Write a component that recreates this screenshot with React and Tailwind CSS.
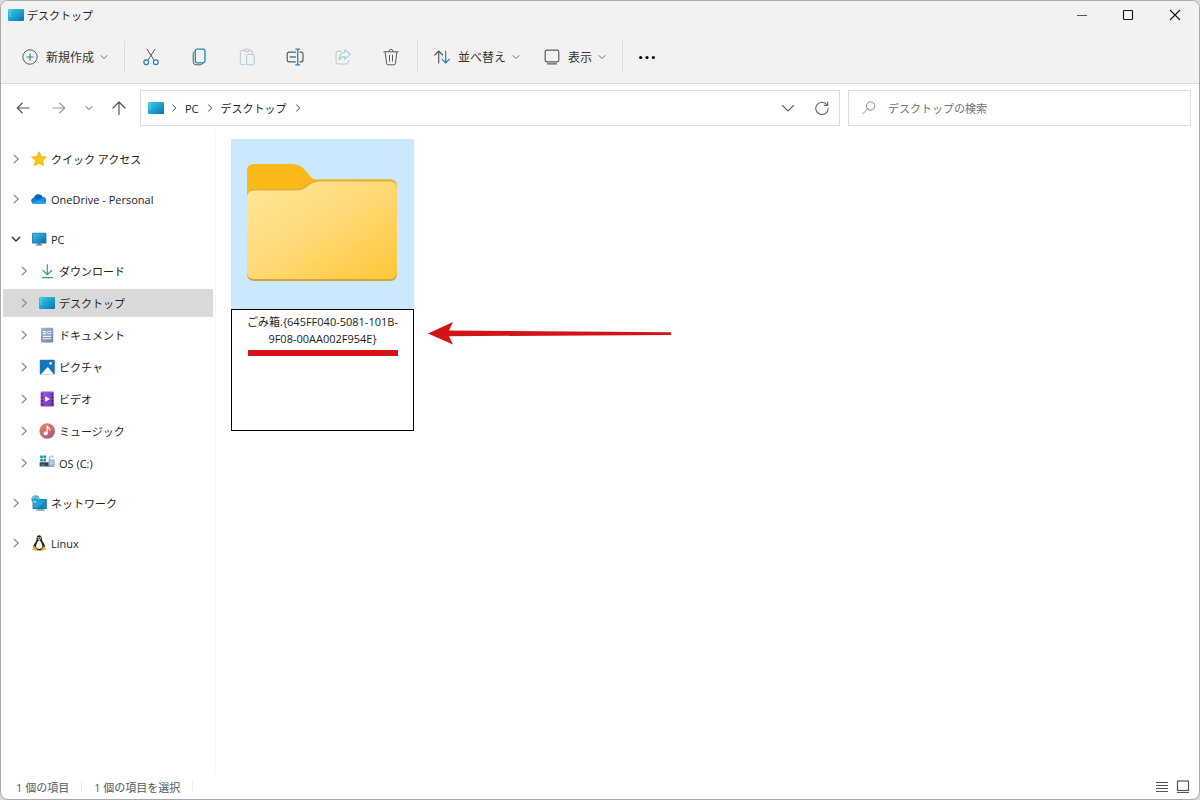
import React from "react";

const line = { fill: "none", strokeLinecap: "round", strokeLinejoin: "round" };

function Chevron({ dir = "down", className = "size-2 text-gray-500" }) {
  const paths = {
    down: "M1 2.6 4 5.6 7 2.6",
    right: "M2.6 1 5.8 4 2.6 7",
  };
  return (
    <svg viewBox="0 0 8 8" className={`shrink-0 ${className}`} aria-hidden="true">
      <path d={paths[dir]} stroke="currentColor" {...line} />
    </svg>
  );
}

function DesktopIcon({ className = "h-4 w-4" }) {
  return (
    <svg viewBox="0 0 16 16" className={`shrink-0 ${className}`} aria-hidden="true">
      <defs>
        <linearGradient id="desk" x1="0" y1="0" x2="1" y2="1">
          <stop offset="0" stopColor="#3ccbe6" />
          <stop offset=".5" stopColor="#1ba3d3" />
          <stop offset="1" stopColor="#0b6fb2" />
        </linearGradient>
      </defs>
      <rect x="0" y="2" width="16" height="12" rx="1" fill="url(#desk)" />
      <path d="M1.6 4h1.2M1.6 6.5h1.2M1.6 9h1.2" stroke="#a5ecf8" strokeWidth="1" />
    </svg>
  );
}

function StarIcon() {
  return (
    <svg viewBox="0 0 16 16" className="size-4 shrink-0" aria-hidden="true">
      <path d="M8 .7 10.2 5.4 15.5 6 11.6 9.5 12.7 14.8 8 12.2 3.3 14.8 4.4 9.5.5 6 5.8 5.4Z" fill="#fcc419" stroke="#f8b90c" strokeWidth=".8" strokeLinejoin="round" />
    </svg>
  );
}

function CloudIcon() {
  return (
    <svg viewBox="0 0 16 16" className="size-4 shrink-0" aria-hidden="true">
      <path d="M3.2 13A3.2 3.2 0 0 1 3 6.7 4.7 4.7 0 0 1 11.8 6 3.6 3.6 0 0 1 12.5 13Z" fill="#0a62b8" />
      <path d="M3.2 13A3.2 3.2 0 0 1 3 6.7L11.5 13Z" fill="#1180d8" />
      <path d="M7 9.4 11.6 6.1A3.5 3.5 0 0 1 12.5 13H3.2Z" fill="#1c8be0" />
      <path d="M1 11.8 7.2 9.2 15.2 11.4A3.2 3.2 0 0 1 12.5 13H3.2A3.2 3.2 0 0 1 1 11.8Z" fill="#2b9deb" />
    </svg>
  );
}

function PcIcon() {
  return (
    <svg viewBox="0 0 16 16" className="size-4 shrink-0" aria-hidden="true">
      <defs>
        <linearGradient id="pc" x1="0" y1="0" x2="1" y2="1">
          <stop offset="0" stopColor="#38c6e6" />
          <stop offset="1" stopColor="#0c6cae" />
        </linearGradient>
      </defs>
      <path d="M6.5 12h3.4v2H6.5z" fill="#7d98a8" />
      <path d="M4.8 13.6h6.6v1H4.8z" fill="#5a7788" />
      <rect x="1" y="1.8" width="14.4" height="10.8" rx=".9" fill="#24739b" />
      <rect x="1.6" y="2.4" width="13.2" height="9.4" fill="url(#pc)" />
    </svg>
  );
}

function DownloadIcon() {
  return (
    <svg viewBox="0 0 16 16" className="size-4 shrink-0" aria-hidden="true">
      <path d="M8.3 1.6V11.4M4 7.5l4.3 4.2 4.3-4.2M3.2 14.6h10.4" stroke="#32a18b" strokeWidth="1.2" {...line} />
    </svg>
  );
}

function DocumentIcon() {
  return (
    <svg viewBox="0 0 16 16" className="size-4 shrink-0" aria-hidden="true">
      <defs>
        <linearGradient id="doc" x1="0" y1="0" x2="1" y2="1">
          <stop offset="0" stopColor="#a4b6ca" />
          <stop offset="1" stopColor="#6d86a3" />
        </linearGradient>
      </defs>
      <rect x="2" y=".8" width="12.2" height="14.6" rx="1" fill="url(#doc)" />
      <path d="M4 4.6h3.2M4 6.6h3.2M4 9.4h8.2M4 11.8h8.2" stroke="#f4f8fc" strokeWidth="1.1" />
      <rect x="8.4" y="3.8" width="3.8" height="3.4" fill="#e9f1fa" />
      <rect x="9.4" y="4.8" width="1.8" height="1.4" fill="#4c7fb2" />
    </svg>
  );
}

function PictureIcon() {
  return (
    <svg viewBox="0 0 16 16" className="size-4 shrink-0" aria-hidden="true">
      <rect x=".8" y=".8" width="15" height="14.6" rx="1.2" fill="#1477bd" />
      <path d="M1.8 15.4 8.2 8.6q.5-.5 1 0l5.8 6.8Z" fill="#fff" />
      <circle cx="11.6" cy="4.4" r="1.3" fill="#fff" />
    </svg>
  );
}

function VideoIcon() {
  return (
    <svg viewBox="0 0 16 16" className="size-4 shrink-0" aria-hidden="true">
      <defs>
        <linearGradient id="vid" x1="0" y1="0" x2="1" y2="1">
          <stop offset="0" stopColor="#9a5be0" />
          <stop offset="1" stopColor="#7433b8" />
        </linearGradient>
      </defs>
      <rect x="1.6" y=".6" width="13.2" height="15" rx="1.2" fill="url(#vid)" />
      <path d="M3.1 2.4v12M13.3 2.4v12" stroke="#35145e" strokeWidth="1.5" strokeDasharray="1.5 1.9" />
      <path d="M6.2 5.3 11 8 6.2 10.8Z" fill="#fff" />
    </svg>
  );
}

function MusicIcon() {
  return (
    <svg viewBox="0 0 16 16" className="size-4 shrink-0" aria-hidden="true">
      <defs>
        <linearGradient id="mus" x1="0" y1="0" x2=".6" y2="1">
          <stop offset="0" stopColor="#e58a4b" />
          <stop offset=".55" stopColor="#cf6c6a" />
          <stop offset="1" stopColor="#a8568e" />
        </linearGradient>
      </defs>
      <circle cx="8.2" cy="8" r="7.8" fill="url(#mus)" />
      <circle cx="6.6" cy="10.4" r="2" fill="#fff" />
      <path d="M8.1 10.4V3.2c.6 1.8 3 1.6 2.8 4" stroke="#fff" strokeWidth="1.2" {...line} />
    </svg>
  );
}

function DriveIcon() {
  return (
    <svg viewBox="0 0 16 16" className="size-4 shrink-0" aria-hidden="true">
      <path d="M1.2.4h2.6v2.7H1.2zM4.4.4H7v2.7H4.4zM1.2 3.7h2.6v2.7H1.2zM4.4 3.7H7v2.7H4.4z" fill="#1292c8" />
      <rect x=".6" y="7.2" width="14.4" height="4.4" rx=".6" fill="#39434d" />
      <path d="M2 10.2h4" stroke="#8fa2b0" strokeWidth=".8" />
      <path d="M10.4 5V3a2 2 0 0 1 4 0" stroke="#93a9bb" strokeWidth="1" fill="none" />
      <rect x="9.4" y="4.6" width="6.4" height="6.4" rx="1" fill="#8fb5d3" />
      <path d="M10.8 6.6h3.6M10.8 8.8h3.6" stroke="#e6f1f8" strokeWidth=".8" />
    </svg>
  );
}

function NetworkIcon() {
  return (
    <svg viewBox="0 0 16 16" className="size-4 shrink-0" aria-hidden="true">
      <path d="M7 13.6h5v1H7z" fill="#7d98a8" />
      <path d="M5 14.6h8.8v1H5z" fill="#56849c" />
      <rect x="1.6" y="4" width="14.2" height="10" rx=".8" fill="#0e6ea3" />
      <rect x="2.2" y="4.6" width="13" height="8.6" fill="#27a3d6" />
      <path d="M15.2 4.6v8.6H6Z" fill="#1586c0" />
      <circle cx="4.6" cy="4.4" r="4.2" fill="#2e9fc8" />
      <path d="M1.4 2.8q2 .6 2.4-2.2M2 7q2-1 3.4.4M5 3q1.6-.6 3.2.6" stroke="#9fe3ee" strokeWidth="1.1" fill="none" />
    </svg>
  );
}

function LinuxIcon() {
  return (
    <svg viewBox="0 0 16 16" className="size-4 shrink-0" aria-hidden="true">
      <path d="M8 .2C6.2.2 5.500 1.600 5.600 3.400c.1 1.900-.6 2.800-1.700 4.600C2.900 9.800 2 11.600 2.500 13.300c.6 1.600 2.700 2.200 5.700 2.200s5.300-.6 5.800-2.200c.5-1.800-.4-3.700-1.400-5.400C11.500 6.200 10.900 5.200 10.800 3.400 10.700 1.500 9.800.2 8 .2Z" fill="#22211f" />
      <path d="M8.200 4.900C6.700 6.100 5 8.800 5.100 11.300c.1 1.700 1.400 2.700 3.100 2.700s3-1 3.100-2.700C11.400 8.800 9.700 6.100 8.200 4.900Z" fill="#f6f6f4" />
      <circle cx="7.100" cy="2.800" r=".7" fill="#fff" />
      <circle cx="9.200" cy="2.800" r=".7" fill="#fff" />
      <path d="M6.600 4.200 8.200 3.400 9.900 4.200 8.200 5.400Z" fill="#efb320" />
      <path d="M3.500 10.900 6.400 14.500 5.300 15.800 1 14.700ZM12.800 10.900 10.200 14.300 11.100 15.800 15.300 14.200Z" fill="#efb320" />
    </svg>
  );
}

const tree = [
  { label: "クイック アクセス", icon: StarIcon },
  { label: "OneDrive - Personal", icon: CloudIcon },
  {
    label: "PC",
    icon: PcIcon,
    children: [
      { label: "ダウンロード", icon: DownloadIcon },
      { label: "デスクトップ", icon: DesktopIcon, selected: true },
      { label: "ドキュメント", icon: DocumentIcon },
      { label: "ピクチャ", icon: PictureIcon },
      { label: "ビデオ", icon: VideoIcon },
      { label: "ミュージック", icon: MusicIcon },
      { label: "OS (C:)", icon: DriveIcon },
    ],
  },
  { label: "ネットワーク", icon: NetworkIcon },
  { label: "Linux", icon: LinuxIcon },
];

function TreeRow({ node, nested }) {
  const Icon = node.icon;
  const open = Boolean(node.children);
  return (
    <div className={`flex h-7 items-center ${nested ? "pl-4" : "pl-2"} ${node.selected ? "bg-[#d9d9d9]" : ""}`}>
      <button type="button" aria-label={`${node.label}を展開`} aria-expanded={open} className="flex h-full w-5 shrink-0 items-center">
        <Chevron dir={open ? "down" : "right"} className={open ? "size-2.5 text-gray-800" : "size-2.5 text-[#8f8f8f]"} />
      </button>
      <a href="#" className="flex h-full min-w-0 flex-1 items-center gap-1">
        <Icon />
        <span className="truncate pt-0.5">{node.label}</span>
      </a>
    </div>
  );
}

function Sidebar() {
  return (
    <nav aria-label="ナビゲーション" className="w-[215px] shrink-0 border-r border-[#f7f7f7] pt-3.5 pr-0.5 pl-0.5 text-[11px] leading-4">
      <ul className="flex flex-col gap-3">
        {tree.map((node) => (
          <li key={node.label} className="flex flex-col gap-1">
            <TreeRow node={node} />
            {node.children && (
              <ul className="flex flex-col gap-1">
                {node.children.map((child) => (
                  <li key={child.label}>
                    <TreeRow node={child} nested />
                  </li>
                ))}
              </ul>
            )}
          </li>
        ))}
      </ul>
    </nav>
  );
}

function TitleBar() {
  return (
    <div className="flex h-[30px] items-start justify-between">
      <div className="flex h-7 items-center gap-[3px] pl-[7px] text-[11px] leading-4">
        <DesktopIcon />
        <h1 className="pt-0.5">デスクトップ</h1>
      </div>
      <div className="flex h-7 text-gray-900">
        <button type="button" aria-label="最小化" className="flex w-[46px] items-center justify-center">
          <svg viewBox="0 0 12 12" className="size-3"><path d="M1 6.500h10" stroke="#555" /></svg>
        </button>
        <button type="button" aria-label="最大化" className="flex w-[46px] items-center justify-center">
          <svg viewBox="0 0 12 12" className="size-3"><rect x="1.500" y="1.500" width="9" height="9" rx=".8" fill="none" stroke="currentColor" strokeWidth="1.200" /></svg>
        </button>
        <button type="button" aria-label="閉じる" className="flex w-[48px] items-center justify-center">
          <svg viewBox="0 0 12 12" className="size-3"><path d="M1 1l10 10M11 1 1 11" stroke="currentColor" strokeWidth="1.100" /></svg>
        </button>
      </div>
    </div>
  );
}

const blue = "#2486b8";
const dark = "#5a5a5a";

const actions = [
  {
    label: "切り取り",
    art: (
      <>
        <path d="M5 1.200 12.400 12.600M13 1.200 5.600 12.600" stroke={dark} {...line} />
        <circle cx="4.200" cy="14.300" r="2.400" stroke={blue} strokeWidth="1.200" fill="none" />
        <circle cx="13.800" cy="14.300" r="2.400" stroke={blue} strokeWidth="1.200" fill="none" />
      </>
    ),
  },
  {
    label: "コピー",
    art: (
      <>
        <path d="M5 3.400C3.800 3.700 3.200 4.300 3.200 5.500v8.300q0 3 3 3h4.500q1.600 0 2.100-1.500" stroke={dark} {...line} />
        <rect x="5.300" y="1.200" width="9.700" height="13.600" rx="1.800" stroke={blue} strokeWidth="1.300" fill="none" />
      </>
    ),
  },
  {
    label: "貼り付け",
    disabled: true,
    art: (
      <>
        <path d="M6.500 2.400H3.300q-1 0-1 1v12.200q0 1 1 1H7M11.200 2.400h2.200q1 0 1 1v1.800" stroke="#c3c3c3" {...line} />
        <rect x="6" y="1.200" width="5.400" height="2.400" rx="1.200" stroke="#c3c3c3" fill="none" />
        <rect x="8.600" y="6.400" width="7.600" height="10.400" rx="1.200" stroke="#a9cbe0" fill="none" />
      </>
    ),
  },
  {
    label: "名前の変更",
    art: (
      <>
        <path d="M9.400 4.200H3.200Q1.200 4.200 1.200 6.200v5.600q0 2 2 2h6.200M14 4.200h1q2 0 2 2v5.600q0 2-2 2h-1" stroke={dark} strokeWidth="1.200" {...line} />
        <path d="M4.200 9h5.200M11.700 1.200v15.600M9.800 1.200h3.800M9.800 16.800h3.800" stroke={blue} strokeWidth="1.300" {...line} />
      </>
    ),
  },
  {
    label: "共有",
    disabled: true,
    art: (
      <>
        <path d="M7.200 3.200H4Q2 3.200 2 5.200v9Q2 16 4 16h8.500q2 0 2-2v-1.500" stroke="#c0c6ca" {...line} />
        <path d="M10.700 1.800 16.400 6.400 10.700 11.200V8.600C8 8.500 6.500 9.500 5 11.600 5.300 7.300 7.500 4.700 10.700 4.500Z" stroke="#a5cde3" strokeWidth="1.100" {...line} />
      </>
    ),
  },
  {
    label: "削除",
    art: (
      <path d="M1.800 3.800h14.400M6.900 3.600q0-2.400 2.100-2.400t2.100 2.400M3.200 4l1.300 11.100q.2 1.700 1.800 1.700h5.400q1.600 0 1.800-1.700L14.800 4M7.500 7.200v6M10.500 7.200v6" stroke={dark} {...line} />
    ),
  },
];

function MenuButton({ label, icon, className = "" }) {
  return (
    <button type="button" className={`flex h-8 shrink-0 items-center gap-2 px-2 ${className}`}>
      {icon}
      <span className="flex items-center gap-1.5">
        <span className="pt-0.5">{label}</span>
        <Chevron className="size-2 text-gray-500" />
      </span>
    </button>
  );
}

function Toolbar() {
  return (
    <div className="flex h-[52px] items-center pl-[13px] text-[12px] leading-4 text-[#333]">
      <MenuButton
        label="新規作成"
        icon={
          <svg viewBox="0 0 16 16" className="size-4" aria-hidden="true">
            <circle cx="8" cy="8" r="7.200" stroke={dark} fill="none" />
            <path d="M8 4.800v6.400M4.800 8h6.400" stroke={blue} strokeWidth="1.100" {...line} />
          </svg>
        }
      />
      <span className="mr-0.5 ml-2 h-8 w-px bg-[#dcdcdc]" />
      {actions.map((action) => (
        <button key={action.label} type="button" aria-label={action.label} disabled={action.disabled} className="flex h-8 w-12 items-center justify-center">
          <svg viewBox="0 0 18 18" className="size-[18px]" aria-hidden="true">{action.art}</svg>
        </button>
      ))}
      <span className="ml-0.5 h-8 w-px bg-[#dcdcdc]" />
      <MenuButton
        label="並べ替え"
        className="ml-2"
        icon={
          <svg viewBox="0 0 16 16" className="size-4" aria-hidden="true">
            <path d="M4.700 14V2.200M.8 6 4.700 2l3.900 4" stroke={dark} strokeWidth="1.200" {...line} />
            <path d="M11.700 2v11.800M8 10.200l3.700 3.800 3.700-3.800" stroke={blue} strokeWidth="1.200" {...line} />
          </svg>
        }
      />
      <MenuButton
        label="表示"
        className="ml-2"
        icon={
          <svg viewBox="0 0 16 16" className="size-4" aria-hidden="true">
            <rect x="1.200" y="1.200" width="13.600" height="11.600" rx="1.800" stroke={dark} strokeWidth="1.200" fill="none" />
            <path d="M3.500 14.800h9" stroke={dark} strokeWidth="1.200" {...line} />
          </svg>
        }
      />
      <span className="ml-2 h-8 w-px bg-[#dcdcdc]" />
      <button type="button" aria-label="もっと見る" className="flex h-8 w-12 items-center justify-center text-black">
        <svg viewBox="0 0 16 16" className="size-4" fill="currentColor" aria-hidden="true">
          <circle cx="1.700" cy="8.500" r="1.600" /><circle cx="8" cy="8.500" r="1.600" /><circle cx="14.300" cy="8.500" r="1.600" />
        </svg>
      </button>
    </div>
  );
}

function AddressRow() {
  const nav = "flex h-8 shrink-0 items-center justify-center";
  return (
    <div className="flex items-center pt-1.5 pr-2 pl-1 text-[11px] leading-4">
      <button type="button" aria-label="戻る" className={`${nav} w-9 text-[#555]`}>
        <svg viewBox="0 0 14 14" className="size-3.5"><path d="M13 7H1.300M6.300 2 1.300 7l5 5" stroke="currentColor" strokeWidth="1.100" {...line} /></svg>
      </button>
      <button type="button" aria-label="進む" className={`${nav} w-9 text-[#999]`}>
        <svg viewBox="0 0 14 14" className="size-3.5"><path d="M1 7h11.700M7.700 2l5 5-5 5" stroke="currentColor" strokeWidth="1.100" {...line} /></svg>
      </button>
      <button type="button" aria-label="最近表示した場所" className={`${nav} w-6`}>
        <Chevron className="size-2 text-gray-600" />
      </button>
      <button type="button" aria-label="上へ" className={`${nav} mr-[3px] w-9 text-[#555]`}>
        <svg viewBox="0 0 14 14" className="size-3.5"><path d="M7 13.500V1.300M1 7l6-6 6 6" stroke="currentColor" strokeWidth="1.200" {...line} /></svg>
      </button>
      <div className="flex h-9 min-w-0 flex-1 items-center border border-[#dedede] pr-[3px] pl-[7px]">
        <DesktopIcon />
        <nav aria-label="パス" className="flex items-center gap-[7px] pl-1.5">
          <Chevron dir="right" className="size-2 text-gray-700" />
          <a href="#" className="pt-0.5">PC</a>
          <Chevron dir="right" className="size-2 text-gray-700" />
          <a href="#" className="pt-0.5">デスクトップ</a>
          <Chevron dir="right" className="size-2 text-gray-700" />
        </nav>
        <button type="button" aria-label="履歴" className="ml-auto flex size-7 items-center justify-center text-[#666]">
          <svg viewBox="0 0 14 14" className="size-3.5"><path d="M1.500 4.500 7 10l5.500-5.500" stroke="currentColor" strokeWidth="1.100" {...line} /></svg>
        </button>
        <button type="button" aria-label="更新" className="ml-1.5 flex size-7 items-center justify-center text-[#666]">
          <svg viewBox="0 0 14 14" className="size-3.5"><path d="M12.200 4A6.200 6.200 0 1 0 13.200 7.200M12.700 1v3.400H9.300" stroke="currentColor" strokeWidth="1.100" {...line} /></svg>
        </button>
      </div>
      <label className="ml-2 flex h-9 w-[343px] items-center gap-3 border border-[#dedede] pl-[13px] text-[#888]">
        <svg viewBox="0 0 14 14" className="size-3.5 shrink-0" aria-hidden="true"><circle cx="8.600" cy="5" r="4.200" stroke="currentColor" fill="none" /><path d="M5.500 8 1 12.600" stroke="currentColor" {...line} /></svg>
        <input type="search" aria-label="デスクトップの検索" placeholder="デスクトップの検索" className="min-w-0 flex-1 bg-transparent pt-0.5 outline-none placeholder:text-[#707070]" />
      </label>
    </div>
  );
}

function Folder() {
  return (
    <svg viewBox="0 0 183 170" className="block w-full bg-[#cce8ff]" role="img" aria-label="フォルダー">
      <defs>
        <linearGradient id="front" x1="0" y1="0" x2="1" y2="1">
          <stop offset="0" stopColor="#ffe69c" />
          <stop offset=".5" stopColor="#ffd974" />
          <stop offset="1" stopColor="#ffc736" />
        </linearGradient>
        <linearGradient id="edge" x1="0" y1="0" x2="0" y2="1">
          <stop offset="0" stopColor="#e5af35" />
          <stop offset="1" stopColor="#d6a23c" />
        </linearGradient>
      </defs>
      <path d="M16 62V32Q16 25 23 25H61Q69 25 74 31L80 38Q82 40.500 86 40.500H159Q166 40.500 166 47.500V80H16Z" fill="#fbb917" />
      <path d="M16 58Q16 50 23 50H61Q70 50 76 45.500Q82 40.500 90 40.500H159Q166 40.500 166 47.500V135Q166 142 159 142H23Q16 142 16 135Z" fill="url(#edge)" />
      <path d="M16 59Q16 51.500 23 51.500H64Q72 51.500 77 47Q82 42.500 90 42.500H159Q166 42.500 166 49.500V133Q166 140 159 140H23Q16 140 16 133Z" fill="url(#front)" />
    </svg>
  );
}

function Files() {
  return (
    <main className="flex min-w-0 flex-1 items-start pt-2 pl-[15px]">
      <div className="w-[183px]">
        <Folder />
        <div className="relative h-[122px] border border-black bg-white">
          <textarea
            aria-label="フォルダー名"
            spellCheck="false"
            defaultValue="ごみ箱.{645FF040-5081-101B-9F08-00AA002F954E}"
            className="block h-full w-full resize-none overflow-hidden px-3 pt-[3px] text-center text-[11px] leading-[17px] text-[#222] outline-none"
          />
          <span className="absolute top-10 left-4 h-1.5 w-[150px] bg-[#d41318]" />
        </div>
      </div>
      <svg viewBox="0 0 243 24" className="mt-[182px] ml-3.5 w-[243px]" aria-hidden="true">
        <path d="M0 12.500 25 1 21 9.500 243 11.200V14L21 15.200 25 23.500Z" fill="#d41318" />
      </svg>
    </main>
  );
}

function StatusBar() {
  return (
    <footer className="flex h-6 items-center pr-[9px] pl-[15px] text-[11px] leading-4 text-[#4f5961]">
      <span className="pt-0.5">1 個の項目</span>
      <span className="mx-3 h-3 w-px bg-[#ececec]" />
      <span className="pt-0.5">1 個の項目を選択</span>
      <span className="mx-3 h-3 w-px bg-[#ececec]" />
      <button type="button" aria-label="詳細表示" className="ml-auto">
        <svg viewBox="0 0 14 14" className="size-3.5"><path d="M1 2.500h12M1 5.500h12M1 8.500h12M1 11.500h12" stroke="#555" /></svg>
      </button>
      <button type="button" aria-label="大アイコン表示" className="ml-[7px]">
        <svg viewBox="0 0 14 14" className="size-3.5"><rect x="1.500" y="1" width="11" height="9.500" fill="none" stroke="#555" strokeWidth="1.200" /><path d="M1 12.500h12" stroke="#555" strokeWidth="1.200" /></svg>
      </button>
    </footer>
  );
}

export default function App() {
  return (
    <div className="min-h-screen bg-[#d8d8d8]">
      <div className="flex min-h-screen flex-col overflow-hidden rounded-lg border border-[#a9a9a9] bg-white font-['Open_Sans','Noto_Sans_CJK_JP',sans-serif] text-[#222]">
        <header className="border-b border-[#dadada] bg-[#f2f2f2]">
          <TitleBar />
          <Toolbar />
        </header>
        <AddressRow />
        <div className="flex flex-1 pt-[5px]">
          <Sidebar />
          <Files />
        </div>
        <StatusBar />
      </div>
    </div>
  );
}
